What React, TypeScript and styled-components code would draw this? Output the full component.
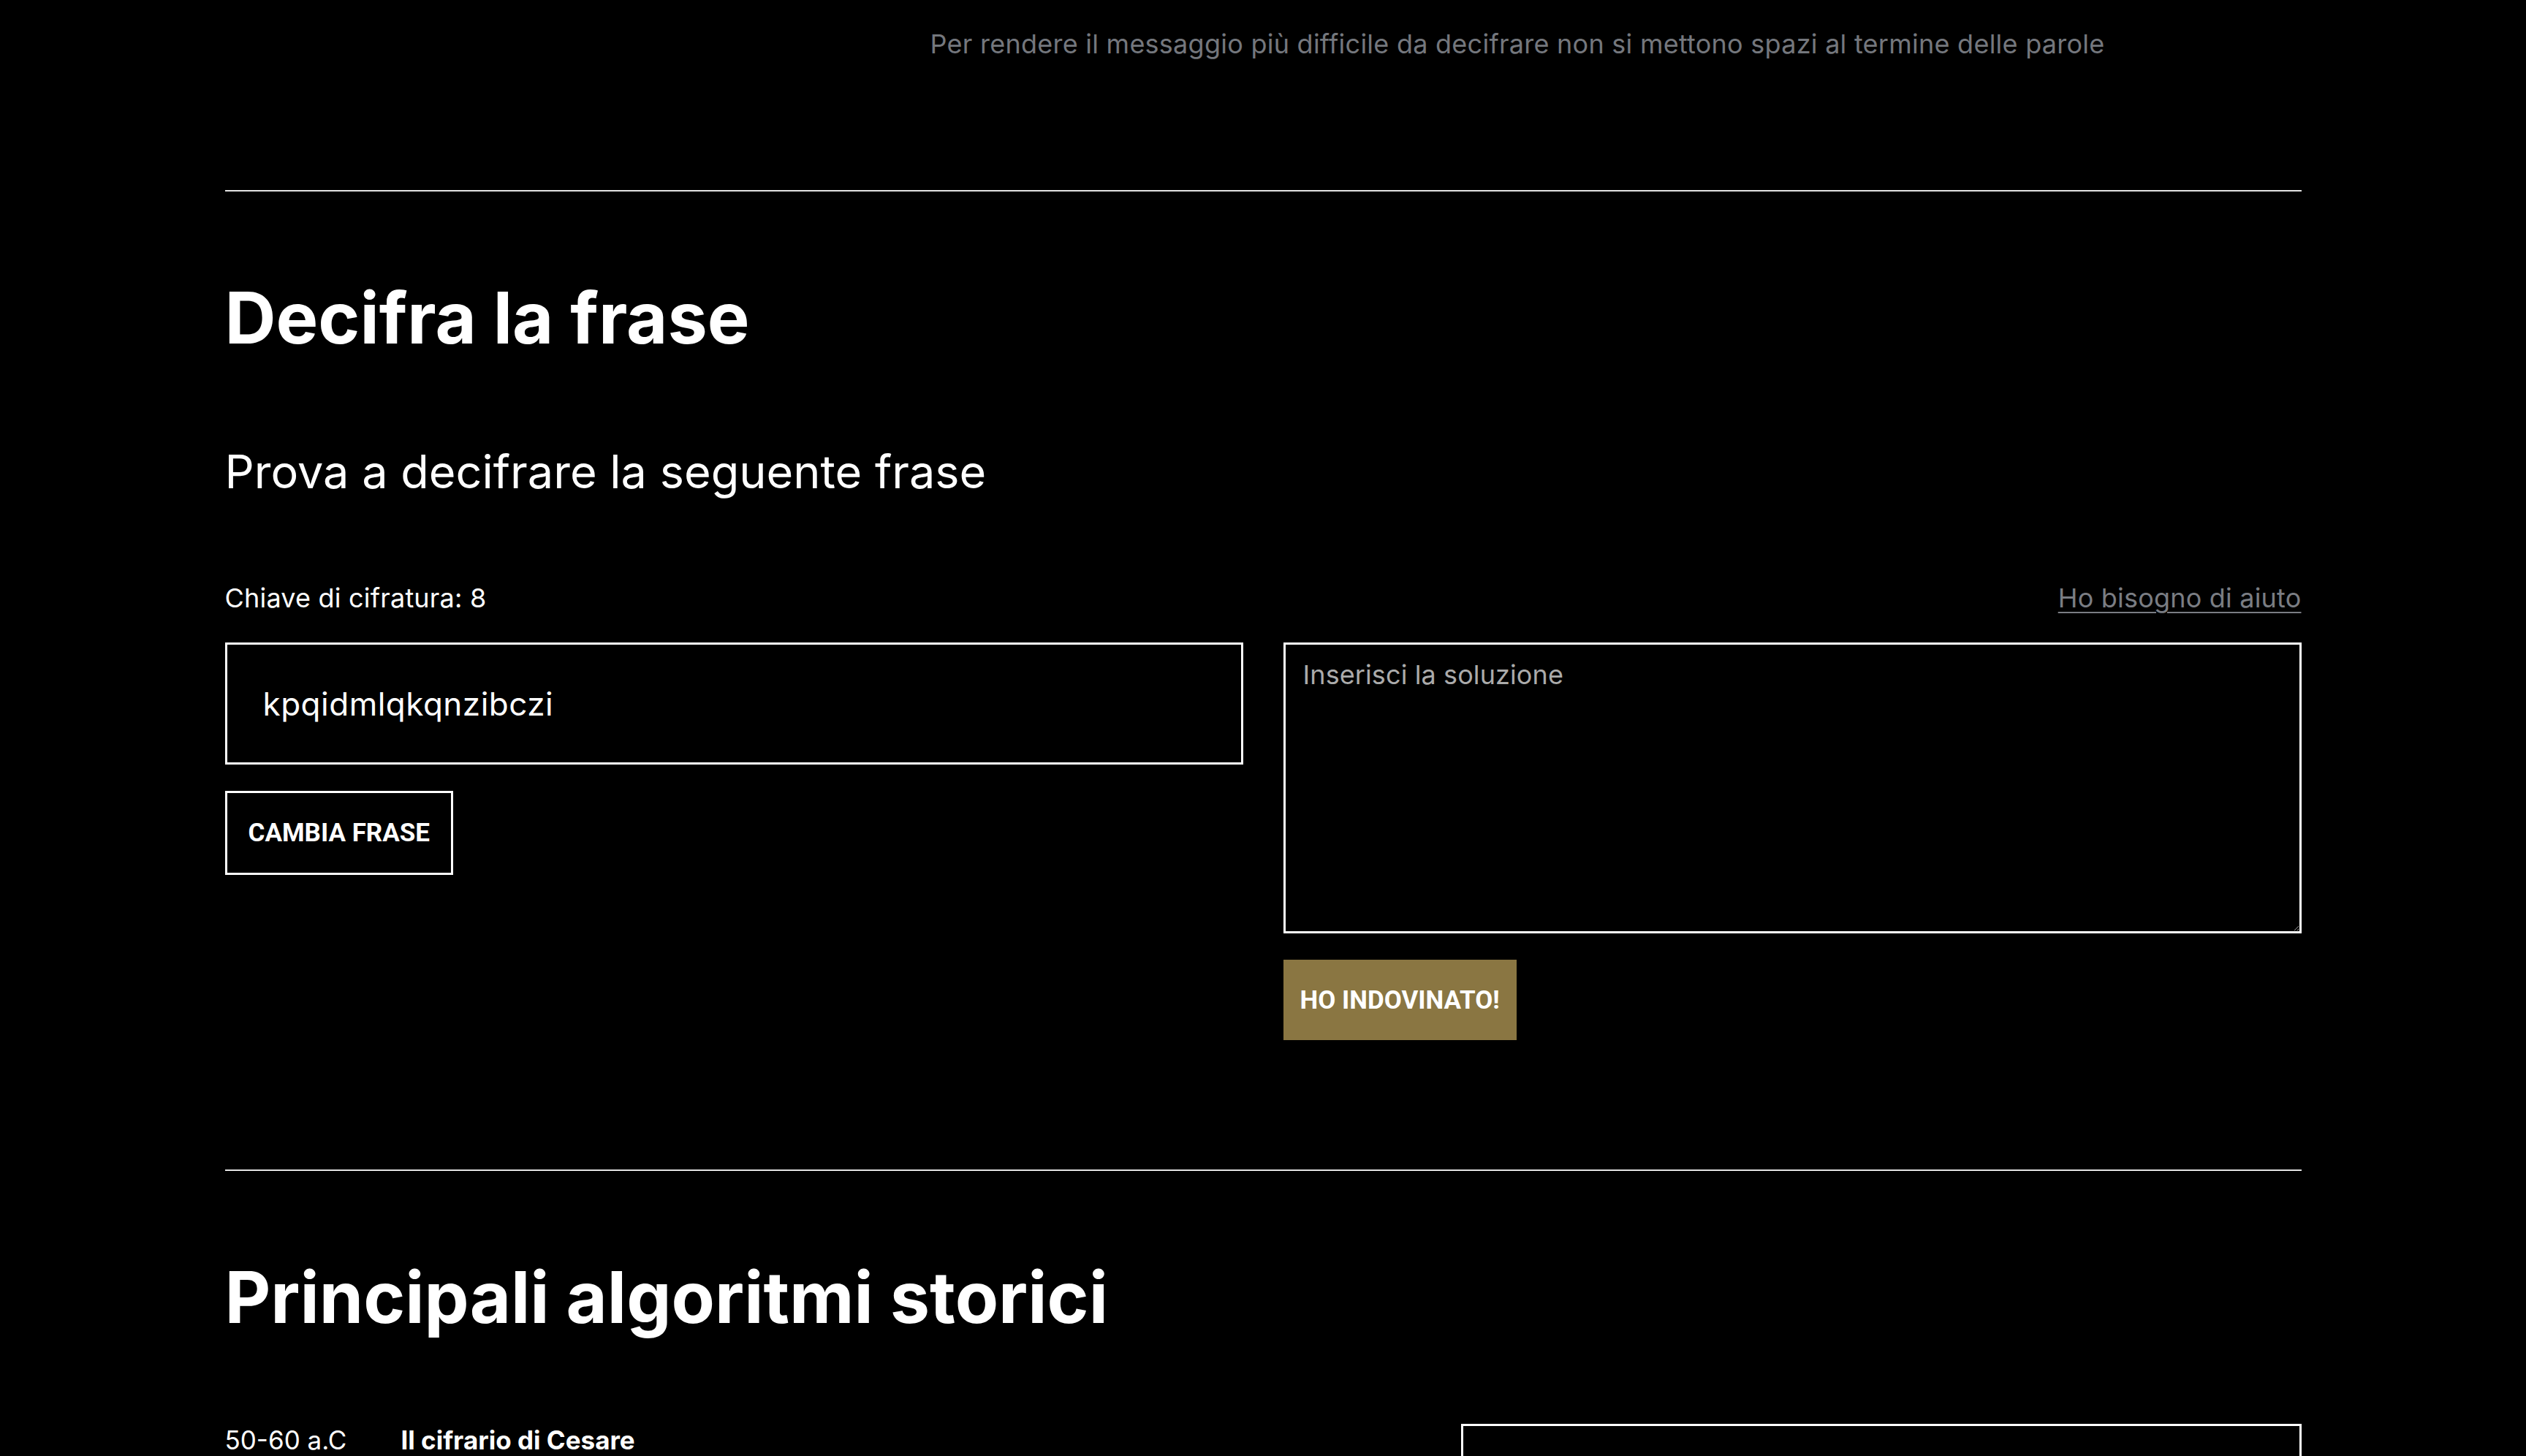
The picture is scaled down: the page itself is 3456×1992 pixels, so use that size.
import React from "react";
import styled, { createGlobalStyle } from "styled-components";

const Global = createGlobalStyle`
  html, body { margin: 0; padding: 0; background: #000; }
  body { font-family: Inter, "Noto Sans", sans-serif; color: #fff; }
  *, *::before, *::after { box-sizing: border-box; }
`;

const Page = styled.main`
  min-height: 1992px;
  background: #000;
  overflow: hidden;
`;

const Container = styled.div`
  width: 2841px;
  margin: 0 auto;
`;

const Note = styled.p`
  margin: 0;
  padding: 37px 0 0 965px;
  font-size: 36px;
  line-height: 46px;
  letter-spacing: 0.25px;
  color: #74777d;
`;

const Divider = styled.hr<{ $top: number }>`
  margin: ${(p) => p.$top}px 0 0;
  border: 0;
  height: 2px;
  background: #e4e4e4;
`;

const Heading = styled.h2`
  margin: 115px 0 0;
  font-size: 97px;
  line-height: 116px;
  font-weight: 700;
  letter-spacing: 0;
`;

const Lead = styled.p`
  margin: 114px 0 0;
  font-size: 63px;
  line-height: 76px;
  font-weight: 400;
`;

const MetaRow = styled.div`
  margin-top: 112px;
  display: flex;
  justify-content: space-between;
  align-items: baseline;
  font-size: 36px;
  line-height: 46px;
  letter-spacing: 0.2px;
`;

const HelpLink = styled.a`
  color: #7a7d83;
  text-decoration: underline;
  text-underline-offset: 6px;
  text-decoration-thickness: 2px;
  cursor: pointer;
`;

const Columns = styled.div`
  margin-top: 38px;
  display: grid;
  grid-template-columns: 1fr 1fr;
  column-gap: 55px;
  align-items: start;
`;

const Column = styled.div`
  display: flex;
  flex-direction: column;
  align-items: flex-start;
  gap: 36px;
`;

const CipherBox = styled.div`
  width: 100%;
  height: 167px;
  border: 3px solid #fff;
  display: flex;
  align-items: center;
  padding: 0 49px;
  font-size: 44px;
  letter-spacing: 0.5px;
`;

const Answer = styled.textarea`
  width: 100%;
  height: 398px;
  border: 3px solid #fff;
  background: #000;
  color: #fff;
  color-scheme: dark;
  padding: 18px 24px;
  font-family: Inter, "Noto Sans", sans-serif;
  font-size: 36px;
  line-height: 46px;
  letter-spacing: 0.1px;
  resize: vertical;
  outline: none;
  &::placeholder {
    color: #ababab;
  }
`;

const Button = styled.button<{ $filled?: boolean }>`
  height: ${(p) => (p.$filled ? 110 : 115)}px;
  padding: 0 ${(p) => (p.$filled ? 23 : 29)}px;
  border: ${(p) => (p.$filled ? "0" : "3px solid #fff")};
  background: ${(p) => (p.$filled ? "#8a7642" : "#000")};
  color: #fff;
  font-family: Roboto, "Liberation Sans", sans-serif;
  font-weight: 700;
  font-size: 35px;
  text-transform: uppercase;
  cursor: pointer;
`;

const Timeline = styled.div`
  margin-top: 115px;
  display: grid;
  grid-template-columns: 241px 1fr 1150px;
  align-items: start;
`;

const Date = styled.span`
  font-size: 35px;
  line-height: 44px;
`;

const EntryTitle = styled.span`
  font-size: 35px;
  line-height: 44px;
  font-weight: 700;
`;

const Preview = styled.div`
  height: 400px;
  border: 3px solid #fff;
`;

export default function App() {
  return (
    <Page>
      <Global />
      <Container>
        <Note>
          Per rendere il messaggio più difficile da decifrare non si mettono spazi al termine delle parole
        </Note>
        <Divider $top={177} />
        <section>
          <Heading>Decifra la frase</Heading>
          <Lead>Prova a decifrare la seguente frase</Lead>
          <MetaRow>
            <span>Chiave di cifratura: 8</span>
            <HelpLink>Ho bisogno di aiuto</HelpLink>
          </MetaRow>
          <Columns>
            <Column>
              <CipherBox>kpqidmlqkqnzibczi</CipherBox>
              <Button>Cambia frase</Button>
            </Column>
            <Column>
              <Answer placeholder="Inserisci la soluzione" />
              <Button $filled>Ho indovinato!</Button>
            </Column>
          </Columns>
        </section>
        <Divider $top={177} />
        <section>
          <Heading>Principali algoritmi storici</Heading>
          <Timeline>
            <Date>50-60 a.C</Date>
            <EntryTitle>Il cifrario di Cesare</EntryTitle>
            <Preview />
          </Timeline>
        </section>
      </Container>
    </Page>
  );
}
